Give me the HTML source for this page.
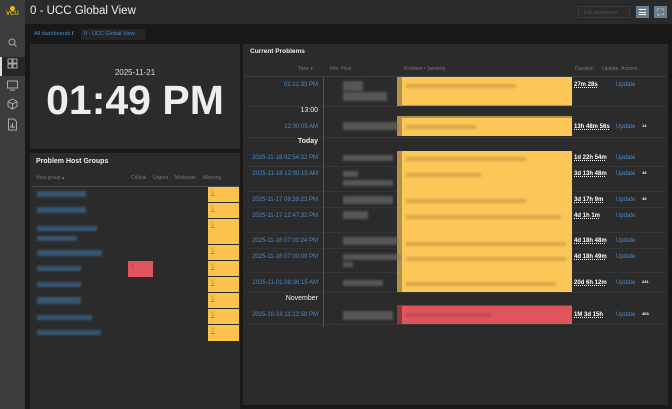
<!DOCTYPE html><html><head><style>
*{margin:0;padding:0;box-sizing:border-box}
body{width:672px;height:409px;background:#191919;font-family:"Liberation Sans",sans-serif;position:relative;overflow:hidden;color:#ddd}
.a{position:absolute}
.side{left:0;top:0;width:25px;height:409px;background:#3c3c3c}
.hdr{left:25px;top:0;width:647px;height:24px;background:#2a2a2a}
.p{background:#2b2b2b}
.t{font-size:6px;color:#4a8bc9;text-align:right;width:80px;left:238px}
.bl{background:#7a7a7a;opacity:.55;filter:blur(1px)}
.hb{background:#3a6186;filter:blur(1px);opacity:.8}
.ln{height:1px;background:#353535}
.d{font-size:6px;color:#fff;font-weight:bold;left:574px;text-decoration:underline dotted}
.u{font-size:6px;color:#4a8bc9;left:616px}
.w{left:208px;width:31px;background:#fcc24c;font-size:6px;color:#b8862a;padding:3px 0 0 3px;text-decoration:underline}
.y{background:#d8a84a;filter:blur(1px);height:4px;left:406px}
</style></head><body>
<div class="a side"></div>
<div class="a" style="left:0;top:57px;width:25px;height:19px;background:#262626"></div>
<div class="a" style="left:0;top:57px;width:2px;height:19px;background:#ddd"></div>
<div class="a" style="left:10px;top:6px;width:5px;height:5px;border-radius:50%;background:#e8b700"></div>
<div class="a" style="left:6px;top:11px;font-size:6px;font-weight:bold;color:#e8b700">VCU</div>
<svg class="a" style="left:7px;top:37px" width="11" height="100" viewBox="0 0 11 100" fill="none" stroke="#aaa" stroke-width="1">
<circle cx="5" cy="5" r="3"/><line x1="7" y1="7" x2="9.5" y2="9.5"/>
<rect x="1" y="22" width="4" height="4"/><rect x="6" y="22" width="4" height="4"/><rect x="1" y="27" width="4" height="4"/><rect x="6" y="27" width="4" height="4"/>
<rect x="0.5" y="44" width="10" height="7"/><line x1="3" y1="53" x2="8" y2="53"/>
<path d="M5.5 62 L10 64.5 L10 69.5 L5.5 72 L1 69.5 L1 64.5 Z M1 64.5 L5.5 67 L10 64.5 M5.5 67 V72"/>
<path d="M1.5 82 H7 L9.5 84.5 V93 H1.5 Z M4 91 V88 M5.5 91 V86 M7 91 V89"/>
</svg>
<div class="a hdr"></div>
<div class="a" style="left:30px;top:5px;font-size:11.5px;color:#eee">0 - UCC Global View</div>
<div class="a" style="left:578px;top:6px;width:52px;height:12px;border:1px solid #3a3a3a;font-size:5px;color:#555;padding:3px 0 0 5px">Edit dashboard</div>
<div class="a" style="left:636px;top:6px;width:13px;height:12px;background:#6a7d8d"></div>
<div class="a" style="left:639px;top:9px;width:7px;height:6px;border-top:1px solid #fff;border-bottom:1px solid #fff"><div style="margin-top:1.5px;height:1px;background:#fff"></div></div>
<div class="a" style="left:654px;top:6px;width:13px;height:12px;background:#6a7d8d;color:#fff;font-size:9px;text-align:center;line-height:12px">⛶</div>
<div class="a" style="left:34px;top:31px;font-size:5.5px;color:#4a8bc9">All dashboards <span style="color:#ccc">/</span></div>
<div class="a" style="left:81px;top:29px;width:64px;height:11px;background:#262626;font-size:5.5px;color:#4a8bc9;padding:2px 0 0 3px">0 - UCC Global View</div>
<div class="a p" style="left:30px;top:44px;width:210px;height:105px"></div>
<div class="a" style="left:30px;top:68px;width:210px;text-align:center;font-size:8px;color:#ddd">2025-11-21</div>
<div class="a" style="left:30px;top:78px;width:210px;text-align:center;font-size:41px;font-weight:bold;color:#eee;line-height:44px">01:49 PM</div>
<div class="a p" style="left:30px;top:153px;width:210px;height:256px"></div>
<div class="a" style="left:36px;top:158px;font-size:7px;font-weight:bold;color:#eee">Problem Host Groups</div>
<div class="a" style="left:36px;top:175px;font-size:5px;color:#777">Host group ▴</div>
<div class="a" style="left:131px;top:175px;font-size:5px;color:#777;word-spacing:2px">Critical&nbsp;&nbsp;Urgent&nbsp;&nbsp;Moderate&nbsp;&nbsp;Warning</div>
<div class="a" style="left:32px;top:186px;width:207px;height:1px;background:#4a4a4a"></div>
<div class="a w" style="top:187px;height:15px">1</div>
<div class="a w" style="top:203px;height:15px">1</div>
<div class="a w" style="top:219px;height:25px">1</div>
<div class="a w" style="top:245px;height:15px">1</div>
<div class="a w" style="top:261px;height:15px">1</div>
<div class="a w" style="top:277px;height:15px">1</div>
<div class="a w" style="top:293px;height:15px">1</div>
<div class="a w" style="top:309px;height:15px">1</div>
<div class="a w" style="top:325px;height:16px">2</div>
<div class="a" style="left:128px;top:261px;width:25px;height:16px;background:#e0545b;font-size:6px;color:#a33;padding:3px 0 0 3px">1</div>
<div class="a hb" style="left:37px;top:191px;width:49px;height:6px"></div>
<div class="a hb" style="left:37px;top:207px;width:49px;height:6px"></div>
<div class="a hb" style="left:37px;top:226px;width:60px;height:5px"></div>
<div class="a hb" style="left:37px;top:236px;width:40px;height:5px"></div>
<div class="a hb" style="left:37px;top:250px;width:65px;height:6px"></div>
<div class="a hb" style="left:37px;top:266px;width:44px;height:5px"></div>
<div class="a hb" style="left:37px;top:282px;width:44px;height:5px"></div>
<div class="a hb" style="left:37px;top:297px;width:44px;height:7px"></div>
<div class="a hb" style="left:37px;top:315px;width:55px;height:5px"></div>
<div class="a hb" style="left:37px;top:330px;width:64px;height:5px"></div>
<div class="a p" style="left:243px;top:44px;width:425px;height:361px"></div>
<div class="a" style="left:250px;top:48px;font-size:6.5px;font-weight:bold;color:#eee">Current Problems</div>
<div class="a" style="left:298px;top:66px;font-size:5px;color:#777">Time ▾</div>
<div class="a" style="left:330px;top:66px;font-size:5px;color:#777">Info&nbsp;&nbsp;Host</div>
<div class="a" style="left:404px;top:66px;font-size:5px;color:#777">Problem • Severity</div>
<div class="a" style="left:575px;top:66px;font-size:5px;color:#777">Duration&nbsp;&nbsp;&nbsp;&nbsp;&nbsp;&nbsp;Update&nbsp;&nbsp;Actions</div>
<div class="a" style="left:245px;top:76px;width:421px;height:1px;background:#3f3f3f"></div>
<div class="a ln" style="left:245px;top:106px;width:421px"></div>
<div class="a ln" style="left:245px;top:137px;width:421px"></div>
<div class="a ln" style="left:245px;top:166px;width:421px"></div>
<div class="a ln" style="left:245px;top:191px;width:421px"></div>
<div class="a ln" style="left:245px;top:207px;width:421px"></div>
<div class="a ln" style="left:245px;top:232px;width:421px"></div>
<div class="a ln" style="left:245px;top:248px;width:421px"></div>
<div class="a ln" style="left:245px;top:272px;width:421px"></div>
<div class="a ln" style="left:245px;top:292px;width:421px"></div>
<div class="a ln" style="left:245px;top:324px;width:421px"></div>
<div class="a" style="left:323px;top:77px;width:1px;height:250px;background:#555"></div>
<div class="a" style="left:397px;top:77px;width:175px;height:29px;background:#b4924a"></div>
<div class="a" style="left:402px;top:77px;width:170px;height:28px;background:#fcc757"></div>
<div class="a" style="left:397px;top:116px;width:175px;height:20px;background:#b4924a"></div>
<div class="a" style="left:402px;top:118px;width:170px;height:18px;background:#fcc757"></div>
<div class="a" style="left:397px;top:151px;width:175px;height:141px;background:#b4924a"></div>
<div class="a" style="left:402px;top:151px;width:170px;height:141px;background:#fcc757"></div>
<div class="a" style="left:397px;top:305px;width:175px;height:19px;background:#8a3a3e"></div>
<div class="a" style="left:402px;top:306px;width:170px;height:18px;background:#e0555c"></div>
<div class="a y" style="top:84px;width:110px"></div>
<div class="a y" style="top:125px;width:70px"></div>
<div class="a y" style="top:157px;width:120px"></div>
<div class="a y" style="top:173px;width:75px"></div>
<div class="a y" style="top:199px;width:120px"></div>
<div class="a y" style="top:215px;width:155px"></div>
<div class="a y" style="top:242px;width:160px"></div>
<div class="a y" style="top:257px;width:160px"></div>
<div class="a y" style="top:282px;width:150px"></div>
<div class="a" style="left:406px;top:313px;width:85px;height:4px;background:#c04850;filter:blur(1px)"></div>
<div class="a bl" style="left:343px;top:81px;width:20px;height:10px"></div>
<div class="a bl" style="left:343px;top:92px;width:44px;height:9px"></div>
<div class="a bl" style="left:343px;top:122px;width:55px;height:8px"></div>
<div class="a bl" style="left:343px;top:155px;width:50px;height:6px"></div>
<div class="a bl" style="left:343px;top:171px;width:15px;height:6px"></div>
<div class="a bl" style="left:343px;top:180px;width:50px;height:6px"></div>
<div class="a bl" style="left:343px;top:196px;width:50px;height:8px"></div>
<div class="a bl" style="left:343px;top:211px;width:25px;height:8px"></div>
<div class="a bl" style="left:343px;top:237px;width:55px;height:8px"></div>
<div class="a bl" style="left:343px;top:254px;width:58px;height:6px"></div>
<div class="a bl" style="left:343px;top:262px;width:10px;height:5px"></div>
<div class="a bl" style="left:343px;top:280px;width:40px;height:6px"></div>
<div class="a bl" style="left:343px;top:311px;width:50px;height:9px"></div>
<div class="a t" style="top:82px">01:21:33 PM</div>
<div class="a t" style="top:107px;color:#eee;font-size:7px">13:00</div>
<div class="a t" style="top:124px">12:00:05 AM</div>
<div class="a t" style="top:138px;color:#eee;font-size:7px;font-weight:bold">Today</div>
<div class="a t" style="top:155px">2025-11-18 02:54:32 PM</div>
<div class="a t" style="top:171px">2025-11-18 12:00:15 AM</div>
<div class="a t" style="top:197px">2025-11-17 08:39:23 PM</div>
<div class="a t" style="top:213px">2025-11-17 12:47:32 PM</div>
<div class="a t" style="top:238px">2025-11-16 07:00:24 PM</div>
<div class="a t" style="top:254px">2025-11-16 07:00:00 PM</div>
<div class="a t" style="top:280px">2025-11-01 08:36:15 AM</div>
<div class="a t" style="top:295px;color:#eee;font-size:7px">November</div>
<div class="a t" style="top:312px">2025-10-18 11:13:58 PM</div>
<div class="a d" style="top:82px">27m 28s</div><div class="a u" style="top:82px">Update</div>
<div class="a d" style="top:124px">13h 48m 56s</div><div class="a u" style="top:124px">Update</div>
<div class="a d" style="top:155px">1d 22h 54m</div><div class="a u" style="top:155px">Update</div>
<div class="a d" style="top:171px">3d 13h 48m</div><div class="a u" style="top:171px">Update</div>
<div class="a d" style="top:197px">3d 17h 9m</div><div class="a u" style="top:197px">Update</div>
<div class="a d" style="top:213px">4d 1h 1m</div><div class="a u" style="top:213px">Update</div>
<div class="a d" style="top:238px">4d 18h 48m</div><div class="a u" style="top:238px">Update</div>
<div class="a d" style="top:254px">4d 18h 49m</div><div class="a u" style="top:254px">Update</div>
<div class="a d" style="top:280px">20d 6h 12m</div><div class="a u" style="top:280px">Update</div>
<div class="a d" style="top:312px">1M 3d 15h</div><div class="a u" style="top:312px">Update</div>
<div class="a" style="left:642px;top:123px;font-size:4px;color:#fff;font-weight:bold">14</div>
<div class="a" style="left:642px;top:170px;font-size:4px;color:#fff;font-weight:bold">43</div>
<div class="a" style="left:642px;top:196px;font-size:4px;color:#fff;font-weight:bold">45</div>
<div class="a" style="left:642px;top:279px;font-size:4px;color:#fff;font-weight:bold">241</div>
<div class="a" style="left:642px;top:311px;font-size:4px;color:#fff;font-weight:bold">403</div>
</body></html>
